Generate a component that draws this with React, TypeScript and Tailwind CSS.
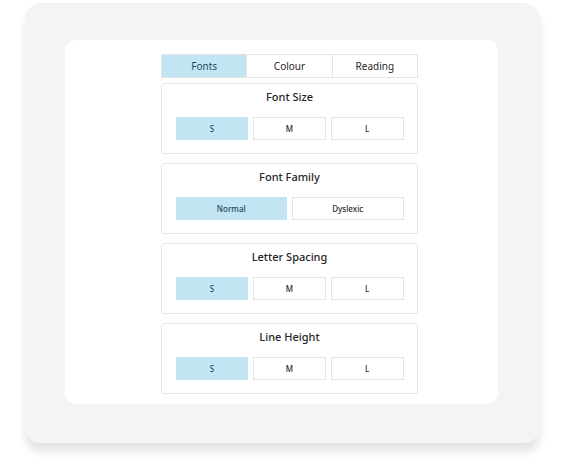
import React from 'react';

const tabs = [
  { title: 'Fonts', active: true },
  { title: 'Colour', active: false },
  { title: 'Reading', active: false },
];

const sections = [
  { title: 'Font Size', options: ['S', 'M', 'L'] },
  { title: 'Font Family', options: ['Normal', 'Dyslexic'] },
  { title: 'Letter Spacing', options: ['S', 'M', 'L'] },
  { title: 'Line Height', options: ['S', 'M', 'L'] },
];

const App = () => {
  return (
    <div className="w-[579px] h-[464px] bg-white pt-[3px] pl-[25px]" style={{ fontFamily: '"Noto Sans", "Open Sans", sans-serif' }}>
      {/* Outer gray frame */}
      <div className="w-[515px] h-[440px] rounded-[16px] bg-[#f4f4f4] pt-[37px] pl-[40px] shadow-[0_9px_9px_rgba(0,0,0,0.11)]">
        {/* White panel */}
        <div className="w-[433px] h-[364px] rounded-[11px] bg-white pt-[14px] pl-[96px]">
          <div className="w-[257px] flex flex-col">
            {/* Tabs */}
            <div className="flex h-[24px]">
              {tabs.map((tab, i) => (
                <div
                  key={tab.title}
                  className={`flex-1 flex items-center justify-center text-[10px] border border-[#e4e4e4] ${i > 0 ? 'border-l-0' : ''} ${
                    tab.active ? 'bg-[#c2e4f3] border-[#c2e4f3] text-[#1e4a63]' : 'bg-white text-[#2a2a2a]'
                  }`}
                >
                  {tab.title}
                </div>
              ))}
            </div>

            {/* Setting cards */}
            <div className="flex flex-col gap-[9px] mt-[5px]">
              {sections.map((section) => (
                <div key={section.title} className="h-[71px] rounded-[3px] border border-[#e6e6e6] flex flex-col items-center">
                  <p className="mt-[5px] h-[16px] text-[11px] leading-[16px] font-medium text-[#262626]">{section.title}</p>
                  <div className="mt-[12px] w-[228px] flex gap-[5px]">
                    {section.options.map((opt, i) => (
                      <div
                        key={opt}
                        className={`flex-1 h-[23px] flex items-center justify-center text-[8px] font-medium border ${
                          i === 0 ? 'bg-[#c2e4f3] border-[#c2e4f3] text-[#1e4a63]' : 'bg-white border-[#e4e4e4] text-[#2a2a2a]'
                        }`}
                      >
                        {opt}
                      </div>
                    ))}
                  </div>
                </div>
              ))}
            </div>
          </div>
        </div>
      </div>
    </div>
  );
};

export default App;
